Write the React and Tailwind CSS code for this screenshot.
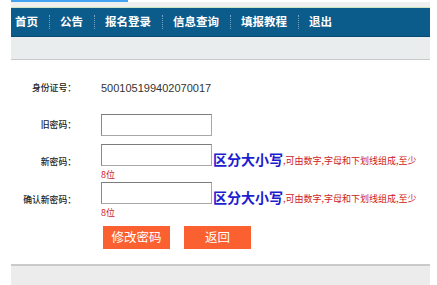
import React from "react";

const NAV = ["首页", "公告", "报名登录", "信息查询", "填报教程", "退出"];

const cjk = "font-['SimSun','Noto_Sans_CJK_SC',sans-serif]";

const Label = ({ children }) => (
  <div className={`w-[76px] shrink-0 text-right text-[8.8px] font-medium text-[#222] ${cjk}`}>{children}</div>
);

const PwdInput = () => (
  <input
    type="password"
    className="w-[111px] h-[22px] bg-white border border-[#a8a8a8] border-t-[#7c7c7c] border-l-[#8a8a8a] outline-none"
  />
);

const Hint = () => (
  <div className="flex flex-col">
    <div className="flex items-end">
      <PwdInput />
      <span className={`ml-[1px] text-[14px] font-bold leading-none text-[#1c1cd0] ${cjk}`}>区分大小写</span>
      <span className={`text-[9px] leading-none mb-[1px] text-[#d01818] ${cjk}`}>,可由数字,字母和下划线组成,至少</span>
    </div>
    <span className={`mt-[3px] text-[9px] leading-[11px] text-[#d01818] ${cjk}`}>8位</span>
  </div>
);

export default function App() {
  return (
    <div className="w-[437px] h-[285px] bg-white overflow-hidden">
      {/* header */}
      <div className="ml-[11px] w-[419px]">
        <div className="h-[2px] w-[117px] bg-[#44a2f2]" />
        <div className="h-[6px] bg-[#efefef] border-b border-[#cde6c2]" />
        <div className={`h-[29px] bg-[#0b5b8b] border-b border-[#084a72] flex items-center pl-[4px] text-white text-[11.5px] font-bold ${cjk}`}>
          {NAV.map((n, i) => (
            <React.Fragment key={n}>
              {i > 0 && <span className="mx-[10.5px] w-[1px] h-[14px] border-l border-dotted border-[#7aa4c2]" />}
              <span>{n}</span>
            </React.Fragment>
          ))}
        </div>
        <div className="h-[23px] bg-[#e9eded] border-b border-[#c9c9c9]" />
      </div>

      {/* form */}
      <div className="flex flex-col">
        <div className="mt-[18px] h-[20px] flex items-center gap-[25px]">
          <Label>身份证号：</Label>
          <span className="text-[11px] text-[#333] font-['Liberation_Sans',Arial,sans-serif]">500105199402070017</span>
        </div>
        <div className="mt-[16px] flex items-center gap-[25px]">
          <Label>旧密码：</Label>
          <PwdInput />
        </div>
        <div className="mt-[8px] flex items-center gap-[25px]">
          <Label>新密码：</Label>
          <Hint />
        </div>
        <div className="mt-[2px] flex items-center gap-[25px]">
          <Label>确认新密码：</Label>
          <Hint />
        </div>
        <div className={`mt-[8px] ml-[103px] flex gap-[14px] ${cjk}`}>
          <button className="w-[67px] h-[23px] bg-[#fb6130] text-white text-[12.5px] leading-none">修改密码</button>
          <button className="w-[67px] h-[23px] bg-[#fb6130] text-white text-[12.5px] leading-none">返回</button>
        </div>
      </div>

      {/* footer band */}
      <div className="mt-[15px] ml-[11px] w-[419px] h-[30px] bg-[#ececec] border-t-2 border-[#cacaca]" />
    </div>
  );
}
